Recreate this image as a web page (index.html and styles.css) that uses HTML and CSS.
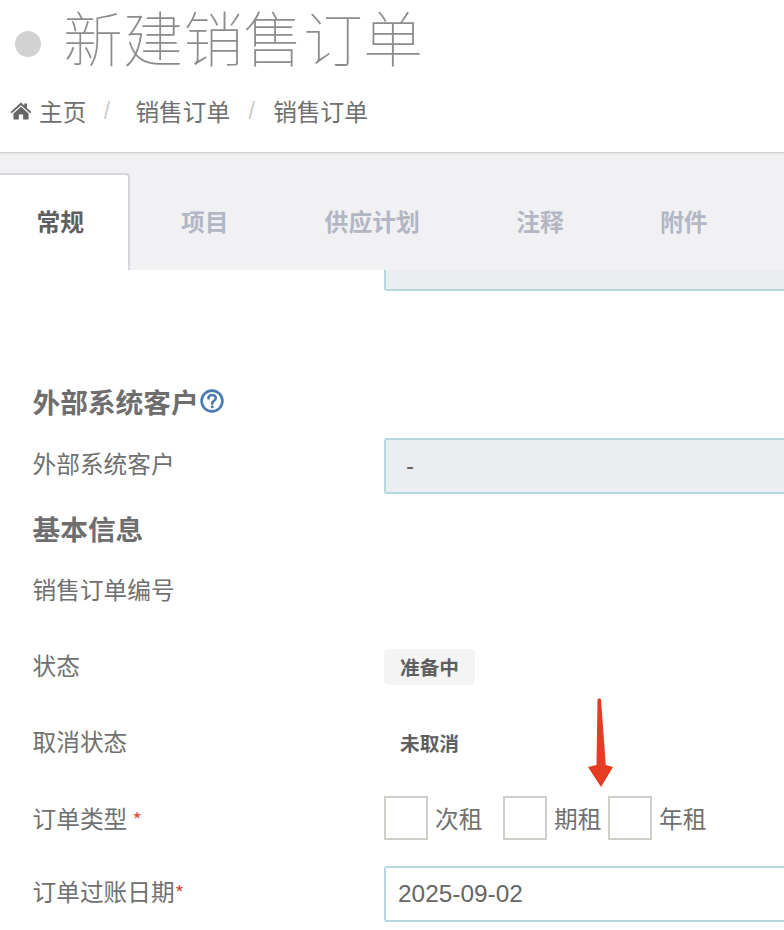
FILE: index.html
```html
<!DOCTYPE html>
<html lang="zh-CN">
<head>
<meta charset="utf-8">
<title>新建销售订单</title>
<link rel="stylesheet" href="styles.css">
</head>
<body>
<header class="page-head">
  <div class="title-row">
    <span class="dot"></span>
    <h1 class="title">新建销售订单</h1>
  </div>
  <nav class="crumbs">
    <svg class="home" viewBox="0 0 24 20" aria-hidden="true"><path d="M12 0.6 L15.6 3.9 V1.6 H18.6 V6.6 L23.6 11 L22.2 12.6 L12 3.7 L1.8 12.6 L0.4 11 Z M12 5.4 L20.4 12.7 V19.4 H14.4 V14 H9.6 V19.4 H3.6 V12.7 Z"/></svg>
    <span class="crumb-first">主页</span>
    <span class="sep">/</span>
    <span class="crumb">销售订单</span>
    <span class="sep">/</span>
    <span class="crumb">销售订单</span>
  </nav>
</header>
<div class="tabbar">
  <div class="tab active">常规</div>
  <div class="tab t2">项目</div>
  <div class="tab t3">供应计划</div>
  <div class="tab t4">注释</div>
  <div class="tab t5">附件</div>
</div>
<main class="form">
  <div class="stub-row"><div class="stub"></div></div>
  <h2 class="section first">外部系统客户<svg class="help" viewBox="0 0 24 24" aria-hidden="true"><circle cx="12" cy="12" r="10.4"/><path d="M8.4 9.4 C8.6 7.1 10.1 6 12.1 6 C14.2 6 15.8 7.3 15.8 9.1 C15.8 10.6 14.9 11.3 13.8 12 C12.7 12.7 12.2 13.2 12.2 14.6"/><circle class="help-dot" cx="12.2" cy="17.8" r="1.5"/></svg></h2>
  <div class="row r-ext">
    <label class="label">外部系统客户</label>
    <div class="input readonly">-</div>
  </div>
  <h2 class="section second">基本信息</h2>
  <div class="row r-no"><label class="label">销售订单编号</label></div>
  <div class="row r-state">
    <label class="label">状态</label>
    <span class="badge">准备中</span>
  </div>
  <div class="row r-cancel">
    <label class="label">取消状态</label>
    <span class="badge plain">未取消</span>
  </div>
  <div class="row r-type">
    <label class="label flat">订单类型 <i class="req">*</i></label>
    <div class="checks">
      <span class="box"></span><span class="opt o1">次租</span>
      <span class="box"></span><span class="opt o2">期租</span>
      <span class="box"></span><span class="opt">年租</span>
    </div>
  </div>
  <div class="row r-date">
    <label class="label">订单过账日期<i class="req">*</i></label>
    <div class="input">2025-09-02</div>
  </div>
</main>
<svg class="arrow" viewBox="0 0 26 90" aria-hidden="true"><path d="M9.5 1.5 C10 0 12.5 0 13 1.5 L17.8 67 L25 69 L13 89 L0 69 L8.5 67 Z"/></svg>
</body>
</html>
```
FILE: styles.css
```css
html, body { margin: 0; padding: 0; }
body {
  width: 784px;
  height: 930px;
  overflow: hidden;
  position: relative;
  background: #fff;
  color: #666;
  font-family: "Noto Sans CJK SC", "Liberation Sans", sans-serif;
}
.page-head {
  height: 152px;
  box-sizing: border-box;
  padding: 0 0 0 10px;
}
.title-row { display: flex; align-items: center; height: 84px; }
.dot {
  width: 26px; height: 26px; border-radius: 50%;
  background: #d2d2d2;
  margin: 3px 0 0 5px;
}
.title {
  margin: 0 0 12px 22px;
  font-size: 60px;
  line-height: 72px;
  font-weight: 100;
  color: #8c8c8c;
  white-space: nowrap;
}
.crumbs {
  display: flex; align-items: center;
  height: 30px; margin-top: 12px;
  font-size: 23.7px; color: #707070;
}
.home { width: 22px; height: 18px; fill: #666; margin-right: 7px; }
.crumb-first, .crumb { white-space: nowrap; }
.sep { color: #ccc; font-family: "Liberation Sans", sans-serif; font-size: 23px; width: 49px; text-align: center; box-sizing: border-box; padding-right: 8px; }
.sep + .crumb + .sep { width: 43px; padding-right: 0; }
.tabbar {
  height: 118px;
  box-sizing: border-box;
  border-top: 1px solid #cfcfcf;
  box-shadow: inset 0 3px 3px -2px rgba(0,0,0,.06);
  background: #f1f1f4;
  display: flex;
  align-items: flex-end;
  font-size: 23.8px;
  font-weight: 700;
  color: #b2b7c3;
}
.tab { height: 97px; line-height: 95px; white-space: nowrap; box-sizing: border-box; }
.tab.active {
  width: 130px;
  background: #fff;
  color: #5f5f5f;
  border: 2px solid #d5d6d9;
  border-bottom: 0;
  border-left: 0;
  border-top-right-radius: 4px;
  padding-left: 36.5px;
  line-height: 91px;
}
.t2 { margin-left: 51px; }
.t3 { margin-left: 96px; }
.t4 { margin-left: 96.5px; }
.t5 { margin-left: 96px; }
.form { padding-left: 32.5px; font-size: 23.7px; color: #707070; }
.stub-row { padding-left: 351.5px; }
.stub {
  height: 19px;
  background: #ecedf1;
  border: 2px solid #b5d8dc;
  border-top: 0;
  border-right: 0;
  border-bottom-left-radius: 3px;
}
.section {
  margin: 0;
  font-size: 27.7px;
  font-weight: 700;
  color: #6e6e6e;
  display: flex;
  align-items: center;
  line-height: 40px;
}
.section.first { margin-top: 90px; }
.section.second { margin-top: 14px; }
.help { width: 24px; height: 24px; margin-left: 1px; fill: none; stroke: #4a7bb0; stroke-width: 2.6; stroke-linecap: round; }
.help-dot { fill: #4a7bb0; stroke: none; }
.row { display: flex; align-items: center; }
.label { width: 351.5px; flex: none; white-space: nowrap; padding-bottom: 6px; }
.label.flat { padding-bottom: 0; }
.req { font-style: normal; color: #d9503a; font-size: 20px; }
.input {
  flex: 1;
  height: 56px;
  box-sizing: border-box;
  border: 2px solid #b5d8dc;
  border-right: 0;
  border-radius: 3px 0 0 3px;
  padding-left: 12px;
  display: flex; align-items: center;
  font-family: "Liberation Sans", sans-serif;
  font-size: 24.4px;
  color: #666;
}
.input.readonly { background: #ecedf1; padding-left: 20px; }
.r-ext { margin-top: 17px; }
.r-no { height: 46px; margin-top: 21px; }
.r-state { height: 46px; margin-top: 30px; }
.r-cancel { height: 46px; margin-top: 30px; }
.r-type { height: 44px; margin-top: 29px; }
.r-date { margin-top: 26px; }
.badge {
  height: 36px; line-height: 36px;
  padding: 0 16px;
  margin-bottom: 2px;
  background: #f4f4f4;
  border-radius: 5px;
  font-size: 19.7px;
  font-weight: 700;
  color: #5f5f5f;
}
.badge.plain { background: transparent; }
.checks { display: flex; align-items: center; }
.box { width: 44px; height: 44px; box-sizing: border-box; border: 2px solid #cfcfc9; }
.opt { margin-left: 7px; white-space: nowrap; }
.o1 { margin-right: 20.6px; }
.o2 { margin-right: 6.6px; }
.arrow {
  position: absolute;
  left: 588px; top: 698px;
  width: 26px; height: 90px;
  fill: #e63c23;
}
```
